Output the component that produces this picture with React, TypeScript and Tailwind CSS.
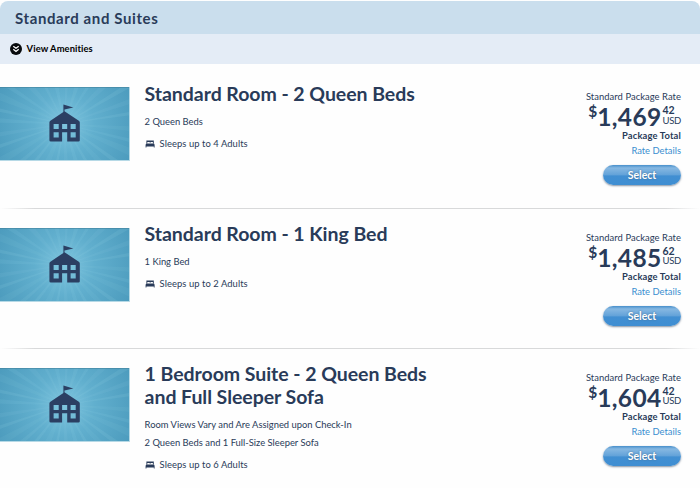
import React from "react";

type Room = {
  title: string[];
  details: string[];
  sleeps: number;
  price: string;
  cents: string;
};

const rooms: Room[] = [
  {
    title: ["Standard Room - 2 Queen Beds"],
    details: ["2 Queen Beds"],
    sleeps: 4,
    price: "1,469",
    cents: "42",
  },
  {
    title: ["Standard Room - 1 King Bed"],
    details: ["1 King Bed"],
    sleeps: 2,
    price: "1,485",
    cents: "62",
  },
  {
    title: ["1 Bedroom Suite - 2 Queen Beds", "and Full Sleeper Sofa"],
    details: [
      "Room Views Vary and Are Assigned upon Check-In",
      "2 Queen Beds and 1 Full-Size Sleeper Sofa",
    ],
    sleeps: 6,
    price: "1,604",
    cents: "42",
  },
];

// Angle, half-width (degrees) and opacity of every light ray behind the building.
const rays = [
  [4, 2, 0.12], [14, 1.5, 0.16], [23, 3, 0.12], [36, 2, 0.2], [47, 3, 0.12], [60, 2, 0.2],
  [73, 3, 0.16], [88, 3, 0.14], [101, 2, 0.2], [114, 4, 0.12], [128, 2, 0.2], [139, 2, 0.18],
  [150, 3, 0.12], [161, 1.5, 0.2], [171, 2, 0.14], [183, 2, 0.16], [192, 1.5, 0.2], [203, 3, 0.12],
  [214, 2, 0.16], [228, 3, 0.14], [243, 2, 0.18], [258, 3, 0.16], [273, 2, 0.14], [288, 3, 0.18],
  [302, 2, 0.16], [316, 3, 0.14], [329, 2, 0.2], [341, 2, 0.14], [351, 1.5, 0.2],
];

function point(angle: number) {
  const a = (angle * Math.PI) / 180;
  return `${(64.5 + 90 * Math.cos(a)).toFixed(2)},${(37 + 90 * Math.sin(a)).toFixed(2)}`;
}

function Thumbnail() {
  return (
    <svg className="-mt-[0.3px] block h-[74px] w-[130px] shrink-0" viewBox="0 0 130 74">
      <defs>
        <radialGradient id="glow" gradientUnits="userSpaceOnUse" cx="64.5" cy="37" r="75">
          <stop offset="0" stopColor="#80c6df" />
          <stop offset="0.4" stopColor="#61afce" />
          <stop offset="1" stopColor="#4c9bbd" />
        </radialGradient>
      </defs>
      <rect width="129.5" height="73.5" fill="url(#glow)" />
      {rays.map(([angle, half, opacity]) => (
        <polygon
          key={angle}
          points={`64.5,37 ${point(angle - half)} ${point(angle + half)}`}
          fill="#9bd8e8"
          opacity={opacity * 0.65}
        />
      ))}
      <path d="M0 .5H129.5" stroke="#3f7f99" strokeOpacity=".55" />
      <path d="M129.5 0V73.5H0" fill="none" stroke="#b6d9e6" />
      <g fill="#2b3f63">
        <path
          fillRule="evenodd"
          d="M64.5 24.2 78.8 33.7Q79.8 34.3 79.8 35.5V53.2Q79.8 54.5 78.5 54.5H67.2V45.3H62.1V54.5H50.8Q49.4 54.5 49.4 53.2V35.5Q49.4 34.3 50.4 33.7ZM53.6 36.9V42H58.7V36.9ZM62.1 36.9V42H67.2V36.9ZM70.6 36.9V42H75.7V36.9ZM53.6 45.3V50.4H58.7V45.3ZM70.6 45.3V50.4H75.7V45.3Z"
        />
        <path d="M63.4 17.6 73.3 20.4 64.5 22.6V25.5H63.4Z" />
      </g>
    </svg>
  );
}

function BedIcon() {
  return (
    <svg className="mr-[5px] h-[8px] w-[10px] shrink-0" viewBox="0 0 10 8" fill="#293b59">
      <path d="M1.4 .6H8.8V3.4H7.9V2H5.4V3.1H4.8V2H2.3V3.4H1.4Z" />
      <path d="M1.2 3.4H9L9.6 4.8V7.4H8.8V6.6H1.4V7.4H.6V4.8Z" />
    </svg>
  );
}

function RoomRow({ room, last }: { room: Room; last: boolean }) {
  return (
    <article className="flex h-[140.3px] flex-col">
      <div className="flex flex-1 pt-[19px]">
        <Thumbnail />
        <div className="ml-[14.6px] -mt-[6px] flex-1 whitespace-nowrap">
          <h2 className="text-[19.5px] leading-[23px] font-bold tracking-[-0.05px]">
            {room.title.map((line) => (
              <span key={line} className="block">
                {line}
              </span>
            ))}
          </h2>
          <div className="mt-[8.3px] text-[9.4px] leading-[17.6px]">
            {room.details.map((line) => (
              <p key={line}>{line}</p>
            ))}
          </div>
          <p className="mt-[4.1px] flex items-center text-[9.4px] leading-[18px] tracking-[0.07px]">
            <BedIcon />
            Sleeps up to {room.sleeps} Adults
          </p>
        </div>
        <div className="mr-[19px] flex w-[120px] flex-col items-end whitespace-nowrap">
          <p className="mt-[2.8px] text-[9.4px] leading-[14px] tracking-[0.06px]">Standard Package Rate</p>
          <div className="flex h-[25px] items-start font-bold">
            <span className="text-[15.5px] leading-[14px]">$</span>
            <span className="text-[24.5px] leading-[25px] tracking-[0.35px]">{room.price}</span>
            <span className="ml-[1px] mt-[2px] flex flex-col text-[10.5px] leading-[9.5px] font-normal">
              <span className="font-bold">{room.cents}</span>
              <span className="text-[9.5px] tracking-[-0.3px]">USD</span>
            </span>
          </div>
          <p className="text-[9.4px] leading-[14px] font-bold tracking-[0.16px]">Package Total</p>
          <a className="mt-[1px] text-[9.4px] leading-[14px] text-[#3b8ed0]">Rate Details</a>
          <button className="mt-[7px] h-[20px] w-[78px] rounded-full bg-[linear-gradient(to_bottom,#478fcb,#86b8e2_15%,#64a3d9_48%,#418fd2_55%,#3f8ed2)] text-[10.5px] leading-[20px] font-bold text-white shadow-[0_1px_2px_rgba(70,90,115,0.65)] [text-shadow:0_0_2px_#476b8a]">
            Select
          </button>
        </div>
      </div>
      {!last && (
        <div className="h-px w-full bg-[linear-gradient(to_right,transparent,#d8d9da_5%,#d8d9da_95%,transparent)]" />
      )}
    </article>
  );
}

export default function App() {
  return (
    <main className="h-[488px] w-[700px] overflow-hidden bg-[#fefefe] font-['Lato','Open_Sans',sans-serif] text-[#293b59]">
      <header className="mt-px flex h-[33px] items-center rounded-t-[8px] bg-[#cadeed] pl-[15px]">
        <h1 className="text-[15px] leading-[18px] font-bold tracking-[0.6px]">Standard and Suites</h1>
      </header>
      <div className="flex h-[30px] items-center bg-[#e4ecf6] pl-[10px] text-black">
        <svg className="h-[12px] w-[12px]" viewBox="0 0 12 12">
          <circle cx="6" cy="6" r="6" fill="#080b0e" />
          <path d="m3.3 3.2 2.7 2 2.7-2M3.3 6.2l2.7 2.2 2.7-2.2" fill="none" stroke="#fff" strokeWidth="1.3" />
        </svg>
        <span className="ml-[4.6px] text-[9.4px] font-bold tracking-[0.07px]">View Amenities</span>
      </div>
      <section className="pt-[4.6px]">
        {rooms.map((room, i) => (
          <RoomRow key={room.price} room={room} last={i === rooms.length - 1} />
        ))}
      </section>
    </main>
  );
}
